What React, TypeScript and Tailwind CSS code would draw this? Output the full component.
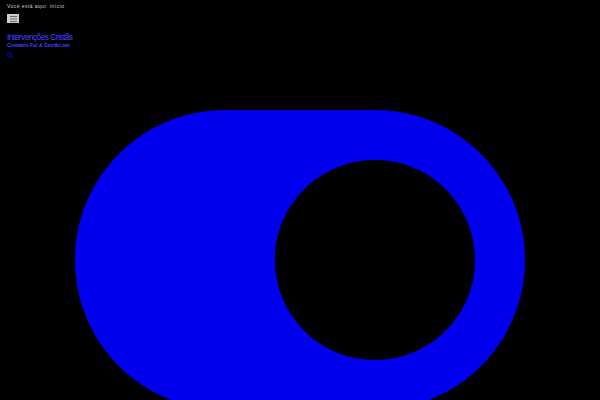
import { FaToggleOn, FaBars, FaSearch } from "react-icons/fa";

const App = () => {
    return (
        <div className="h-[400px] w-[600px] overflow-hidden bg-black font-['Liberation_Sans',sans-serif]">
            <div className="flex flex-col items-start px-[7px] pt-[3px]">
                <p className="text-[5px] leading-[6px] tracking-[0.45px] text-[#cccccc]">Você está aqui: Início</p>
                <div className="mt-[5px] flex h-[9px] w-[12px] items-center justify-center bg-[#cccccc]">
                    <FaBars className="h-[8px] w-[11px] text-[#666666]" />
                </div>
                <h1 className="mt-[9px] text-[8.5px] leading-[10px] tracking-[-0.6px] text-[#4444ff]">Intervenções Cristãs</h1>
                <p className="text-[5px] leading-[7px] font-bold text-[#4444ff]">Contatos Fui &amp; Gestão.net</p>
                <FaSearch className="mt-[3px] h-[6px] w-[6px] text-[#0000ee]" />
            </div>
            <div className="flex justify-center">
                <FaToggleOn className="mt-[2px] h-[400px] w-[450px] shrink-0 text-[#0000ee]" />
            </div>
        </div>
    );
};

export default App;
